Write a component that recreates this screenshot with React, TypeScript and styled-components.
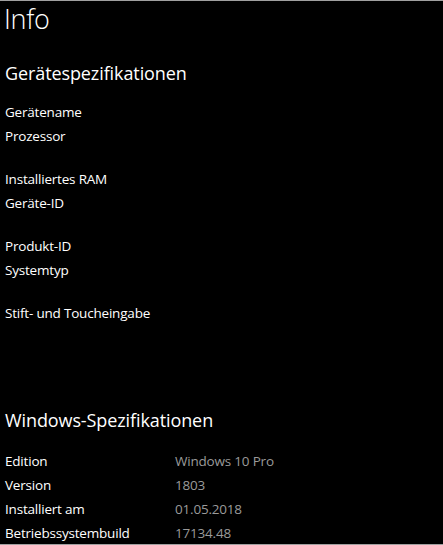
import styled, { createGlobalStyle } from 'styled-components';

const GlobalStyle = createGlobalStyle`
  html, body {
    margin: 0;
    padding: 0;
    background: #000;
  }
  body {
    font-family: 'Open Sans', 'Noto Sans', sans-serif;
    color: #fff;
  }
`;

type Spec = { label: string; value?: string };

const DEVICE_GROUPS: Spec[][] = [
  [{ label: 'Gerätename' }, { label: 'Prozessor' }],
  [{ label: 'Installiertes RAM' }, { label: 'Geräte-ID' }],
  [{ label: 'Produkt-ID' }, { label: 'Systemtyp' }],
  [{ label: 'Stift- und Toucheingabe' }],
];

const WINDOWS_SPECS: Spec[] = [
  { label: 'Edition', value: 'Windows 10 Pro' },
  { label: 'Version', value: '1803' },
  { label: 'Installiert am', value: '01.05.2018' },
  { label: 'Betriebssystembuild', value: '17134.48' },
];

export default function App() {
  return (
    <>
      <GlobalStyle />
      <Window>
        <Title>Info</Title>
        <SectionTitle>Gerätespezifikationen</SectionTitle>
        <Groups>
          {DEVICE_GROUPS.map((group, i) => (
            <Group key={i}>
              {group.map(item => (
                <Label key={item.label}>{item.label}</Label>
              ))}
            </Group>
          ))}
        </Groups>
        <SectionTitle $gap={82}>Windows-Spezifikationen</SectionTitle>
        <SpecGrid>
          {WINDOWS_SPECS.map(item => (
            <SpecRow key={item.label}>
              <Label>{item.label}</Label>
              <Value>{item.value}</Value>
            </SpecRow>
          ))}
        </SpecGrid>
      </Window>
    </>
  );
}

const Window = styled.div`
  width: 443px;
  height: 545px;
  box-sizing: border-box;
  border-top: 1px solid #a0a0a0;
  border-bottom: 1px solid #a0a0a0;
  padding: 0 0 0 5px;
  overflow: hidden;
  display: flex;
  flex-direction: column;
`;

const Title = styled.h1`
  margin: 0;
  margin-left: -1px;
  font-size: 27px;
  font-weight: 300;
  line-height: 36px;
  letter-spacing: -0.3px;
`;

const SectionTitle = styled.h2<{ $gap?: number }>`
  margin: ${p => p.$gap ?? 23}px 0 0;
  font-size: 18px;
  font-weight: 400;
  line-height: 26px;
  letter-spacing: -0.1px;
`;

const Groups = styled.div`
  display: flex;
  flex-direction: column;
  gap: 19px;
  margin-top: 14px;
`;

const Group = styled.div`
  display: flex;
  flex-direction: column;
`;

const Label = styled.div`
  font-size: 13.5px;
  line-height: 24px;
  color: #fff;
  letter-spacing: -0.2px;
`;

const SpecGrid = styled.div`
  display: flex;
  flex-direction: column;
  margin-top: 16px;
`;

const SpecRow = styled.div`
  display: grid;
  grid-template-columns: 170px 1fr;
`;

const Value = styled.div`
  font-size: 13.5px;
  line-height: 24px;
  color: #9a9a9a;
  letter-spacing: -0.2px;
`;
